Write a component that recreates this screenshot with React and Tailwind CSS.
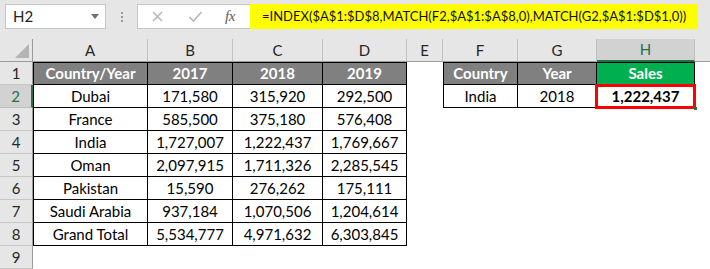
import React from 'react';

const cols = ['A', 'B', 'C', 'D', 'E', 'F', 'G', 'H'];

const data = [
  ['Dubai', '171,580', '315,920', '292,500'],
  ['France', '585,500', '375,180', '576,408'],
  ['India', '1,727,007', '1,222,437', '1,769,667'],
  ['Oman', '2,097,915', '1,711,326', '2,285,545'],
  ['Pakistan', '15,590', '276,262', '175,111'],
  ['Saudi Arabia', '937,184', '1,070,506', '1,204,614'],
  ['Grand Total', '5,534,777', '4,971,632', '6,303,845'],
];

function RowNum({ n, active }) {
  return (
    <div
      className={
        active
          ? 'flex items-center justify-center bg-[#d2d2d2] text-[#217346] border-b border-[#bdbdbd] border-r-2 border-r-[#217346]'
          : 'flex items-center justify-center bg-[#e6e6e6] text-[#262626] border-b border-[#c8c8c8] border-r border-r-[#9b9b9b]'
      }
    >
      {n}
    </div>
  );
}

function TopBar() {
  return (
    <div className="h-[39px] bg-[#e6e6e6] flex items-start pt-[4px] pl-[5px] pr-[12px]">
      <div className="w-[101px] h-[25px] bg-white border border-[#c6c6c6] flex items-center justify-between pl-[7px] pr-[6px] text-[15px] text-[#222]">
        <span>H2</span>
        <span className="w-0 h-0 border-l-[4px] border-r-[4px] border-t-[5px] border-l-transparent border-r-transparent border-t-[#707070]" />
      </div>
      <div className="w-[31px] h-[25px] flex flex-col items-center justify-center gap-[2px]">
        <span className="w-[2px] h-[2px] bg-[#9a9a9a]" />
        <span className="w-[2px] h-[2px] bg-[#9a9a9a]" />
        <span className="w-[2px] h-[2px] bg-[#9a9a9a]" />
      </div>
      <div className="w-[113px] h-[25px] bg-white border border-r-0 border-[#c6c6c6] flex items-center pl-[13px]">
        <svg width="13" height="13" viewBox="0 0 13 13" className="mr-[24px]">
          <path d="M2 2 L11 11 M11 2 L2 11" stroke="#b8b8b8" strokeWidth="1.6" fill="none" />
        </svg>
        <svg width="15" height="13" viewBox="0 0 15 13" className="mr-[22px]">
          <path d="M1.5 7 L5.5 11 L13.5 2" stroke="#b8b8b8" strokeWidth="1.7" fill="none" />
        </svg>
        <span className="font-['Liberation_Serif',serif] italic text-[15px] text-[#5c5c5c] tracking-[-0.5px]">fx</span>
      </div>
      <div className="flex-1 h-[25px] bg-[#ffff00] flex items-center pl-[12px] text-[13px] text-[#111] whitespace-nowrap">
        =INDEX($A$1:$D$8,MATCH(F2,$A$1:$A$8,0),MATCH(G2,$A$1:$D$1,0))
      </div>
    </div>
  );
}

export default function App() {
  return (
    <div className="w-[710px] h-[269px] overflow-hidden bg-white font-['Lato',sans-serif] text-[15px] leading-none">
      <TopBar />
      <div className="grid grid-cols-[33px_115px_85px_90px_84px_36px_75px_79px_98px_1fr] grid-rows-[repeat(10,23px)]">
        {/* column headers */}
        <div className="relative bg-[#e6e6e6] border-r border-b border-[#9b9b9b]">
          <svg className="absolute right-[3px] bottom-[3px]" width="14" height="14" viewBox="0 0 14 14">
            <path d="M14 0 L14 14 L0 14 Z" fill="#b4b4b4" />
          </svg>
        </div>
        {cols.map((c) => (
          <div
            key={c}
            className={
              c === 'H'
                ? 'flex items-center justify-center bg-[#d2d2d2] text-[#217346] border-r border-[#c0c0c0] border-b-2 border-b-[#217346]'
                : 'flex items-center justify-center bg-[#e6e6e6] text-[#262626] border-r border-[#c0c0c0] border-b border-b-[#9b9b9b]'
            }
          >
            {c}
          </div>
        ))}
        <div className="bg-[#e6e6e6] border-b border-[#9b9b9b]" />

        {/* row 1 */}
        <RowNum n={1} />
        <div className="flex items-center justify-center bg-[#808080] text-white font-bold border border-black">Country/Year</div>
        <div className="flex items-center justify-center bg-[#808080] text-white font-bold border-y border-r border-black">2017</div>
        <div className="flex items-center justify-center bg-[#808080] text-white font-bold border-y border-r border-black">2018</div>
        <div className="flex items-center justify-center bg-[#808080] text-white font-bold border-y border-r border-black">2019</div>
        <div />
        <div className="flex items-center justify-center bg-[#808080] text-white font-bold border border-black">Country</div>
        <div className="flex items-center justify-center bg-[#808080] text-white font-bold border-y border-r border-black">Year</div>
        <div className="flex items-center justify-center bg-[#00b050] text-white font-bold border-y border-r border-black">Sales</div>
        <div />

        {data.map((row, i) => (
          <React.Fragment key={row[0]}>
            <RowNum n={i + 2} active={i === 0} />
            <div className="flex items-center justify-center text-black border-x border-b border-black">{row[0]}</div>
            <div className="flex items-center justify-center text-black border-r border-b border-black">{row[1]}</div>
            <div className="flex items-center justify-center text-black border-r border-b border-black">{row[2]}</div>
            <div className="flex items-center justify-center text-black border-r border-b border-black">{row[3]}</div>
            <div />
            {i === 0 ? (
              <>
                <div className="flex items-center justify-center text-black border-x border-b border-black">India</div>
                <div className="flex items-center justify-center text-black border-r border-b border-black">2018</div>
                <div className="relative flex items-center justify-center text-black font-bold border-r border-b border-black">
                  1,222,437
                  <span className="absolute -left-[2px] -top-[1px] -right-[2px] -bottom-[2px] border-[3px] border-[#ff0000]" />
                  <span className="absolute -right-[3px] -bottom-[3px] w-[3px] h-[3px] bg-[#217346]" />
                </div>
              </>
            ) : (
              <>
                <div />
                <div />
                <div />
              </>
            )}
            <div />
          </React.Fragment>
        ))}

        {/* row 9 */}
        <RowNum n={9} />
        <div className="col-span-9" />
      </div>
    </div>
  );
}
